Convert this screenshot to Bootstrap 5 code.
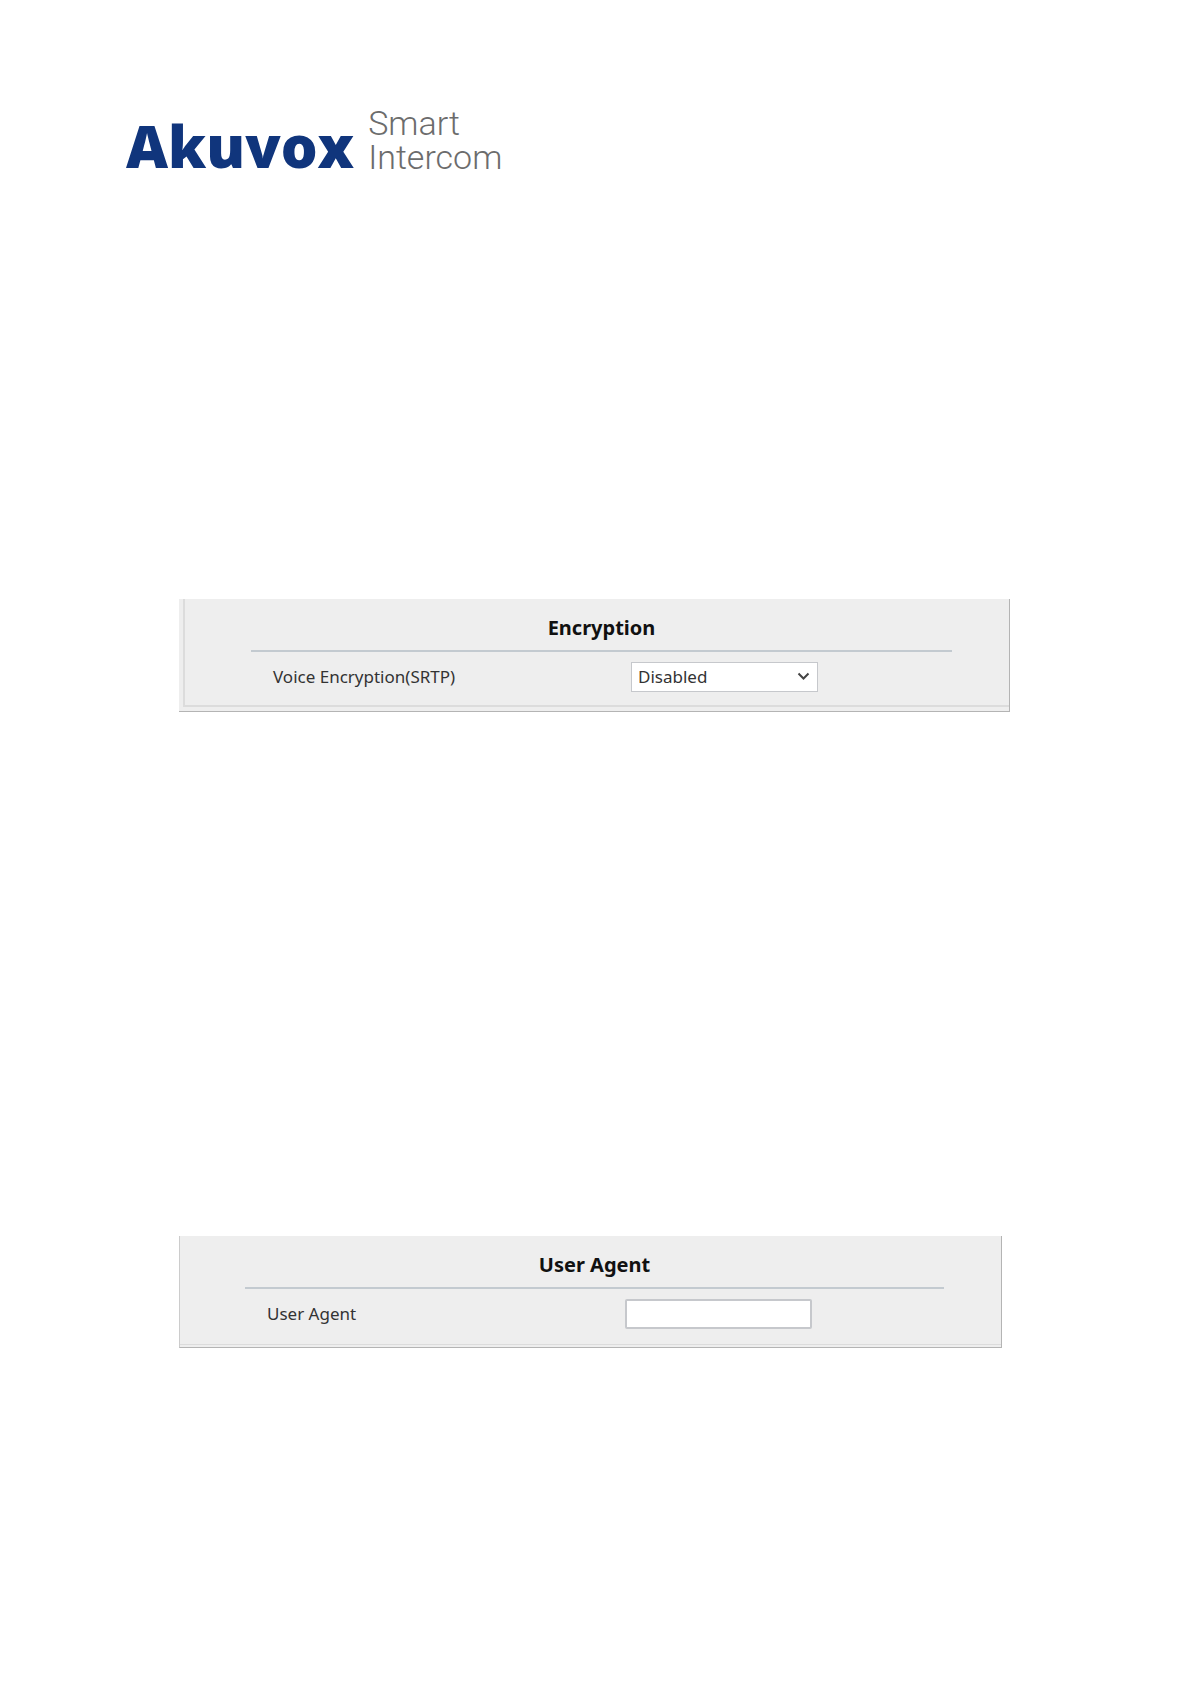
<!DOCTYPE html>
<html lang="en">
<head>
<meta charset="utf-8">
<meta name="viewport" content="width=device-width, initial-scale=1">
<title>Akuvox Smart Intercom</title>
<link href="https://cdn.jsdelivr.net/npm/bootstrap@5.3.0/dist/css/bootstrap.min.css" rel="stylesheet">
<style>
body { background: #fff; color: #333; font-family: "Noto Sans", "Open Sans", sans-serif; }
.page-head { padding: 106px 126px 0; height: 180px; gap: 14px; }
.brand-name { font: 800 58px/64px "Open Sans", sans-serif; color: #10357c; }
.brand-tag { font: 300 34px/34px Roboto, sans-serif; color: #6c6c6c; }
.page-main { padding: 419px 181px 0 179px; }
.settings-panel { background: #eee; border: solid #b4b4b4; border-width: 0 1px 1px 0; padding-bottom: 4px; }
.settings-panel + .settings-panel { margin: 524px 8px 0 0; border-left: 1px solid #ccc; padding-bottom: 2px; }
.panel-frame { border-bottom: 2px solid #dcdcdc; padding: 14px 57px 13px 66px; }
.framed { margin-left: 4px; border-left: 2px solid #dcdcdc; }
.settings-panel + .settings-panel .panel-frame { padding-left: 65px; padding-bottom: 15px; border-bottom-width: 1px; }
.panel-title { font-size: 20px; line-height: 30px; color: #111; border-bottom: 2px solid #c3cad0; padding-bottom: 7px; }
.field-row { padding: 10px 22px 0; }
.field-name { width: 358px; font-size: 17px; line-height: 30px; }
.field-box { width: 187px; height: 30px; border: 2px solid #c6c8cc; border-radius: 2px; background-color: #fff; font-size: 17px; line-height: 24px; color: #333; padding: 0 6px; }
select.field-box { border-width: 1px; border-radius: 0; appearance: none; }
.chevron { right: 8px; top: 10px; pointer-events: none; }
</style>
</head>
<body>
<header class="page-head d-flex align-items-start">
  <div class="brand-name mt-2">Akuvox</div>
  <div class="brand-tag"><div>Smart</div><div>Intercom</div></div>
</header>
<main class="page-main">
  <section class="settings-panel">
    <div class="panel-frame framed">
      <h2 class="panel-title fw-bold text-center mb-0">Encryption</h2>
      <div class="field-row d-flex align-items-center">
        <label class="field-name" for="srtp">Voice Encryption(SRTP)</label>
        <div class="position-relative">
          <select class="field-box d-block" id="srtp"><option>Disabled</option><option>Enabled</option></select>
          <svg class="chevron position-absolute" width="13" height="9" viewBox="0 0 13 9" fill="none" stroke="#444" stroke-width="2" aria-hidden="true"><path d="M1.5 1.5 6.5 6.5 11.5 1.5"/></svg>
        </div>
      </div>
    </div>
  </section>
  <section class="settings-panel">
    <div class="panel-frame">
      <h2 class="panel-title fw-bold text-center mb-0">User Agent</h2>
      <div class="field-row d-flex align-items-center">
        <label class="field-name" for="agent">User Agent</label>
        <input class="field-box" id="agent" type="text">
      </div>
    </div>
  </section>
</main>
<script src="https://cdn.jsdelivr.net/npm/bootstrap@5.3.0/dist/js/bootstrap.bundle.min.js"></script>
</body>
</html>
